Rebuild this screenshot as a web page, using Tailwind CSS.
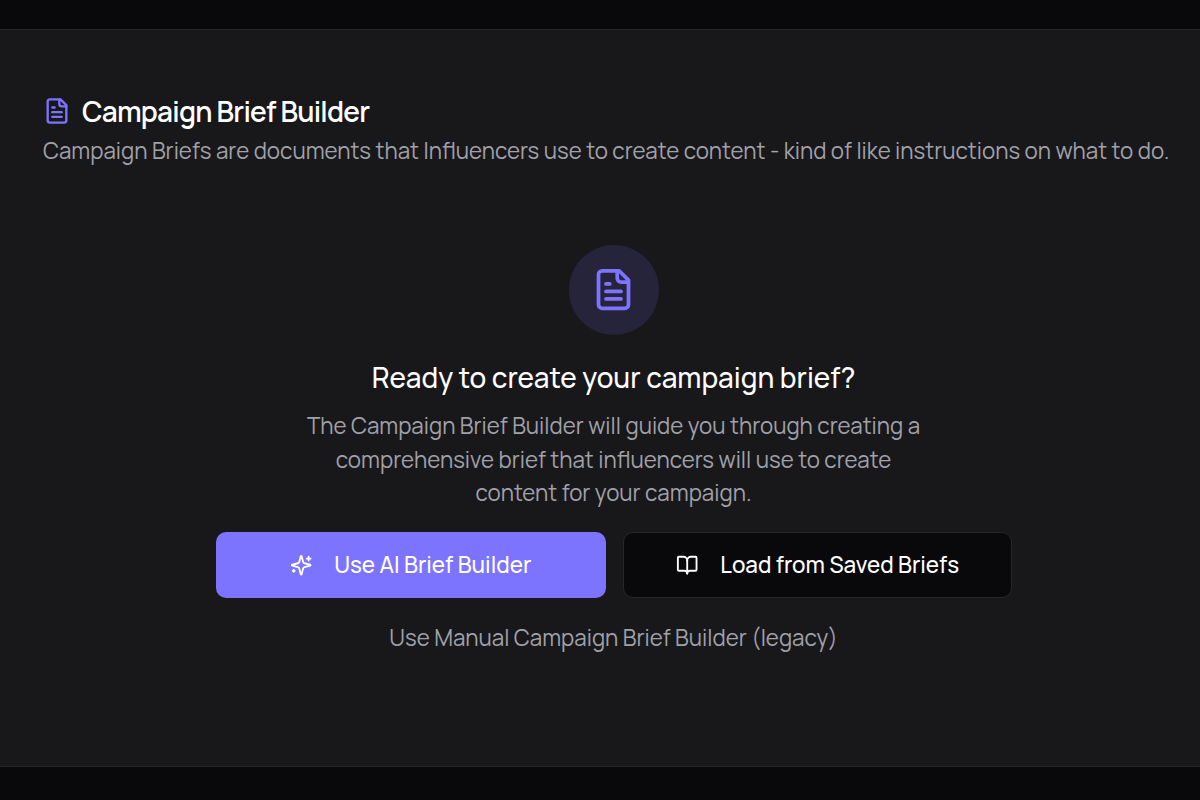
<!DOCTYPE html>
<html><head><script src="https://cdn.jsdelivr.net/npm/@tailwindcss/browser@4"></script></head>
<body class="m-0 bg-[#09090b] font-['Manrope','Inter','Noto_Sans',sans-serif]">
<div class="w-[1200px] h-[800px] overflow-hidden flex flex-col pt-[29px] pb-[33px]">
<main class="flex-1 bg-[#18181b] border-y border-[#27272a] pl-[43px] pr-[16px] pt-[63px]">
<div class="flex items-center gap-[11px] h-[36px]">
<svg class="w-[28px] h-[28px] text-[#7c73ff]" viewBox="0 0 24 24" fill="none" stroke="currentColor" stroke-width="2" stroke-linecap="round" stroke-linejoin="round"><path d="M15 2H6a2 2 0 0 0-2 2v16a2 2 0 0 0 2 2h12a2 2 0 0 0 2-2V7Z"/><path d="M14 2v4a2 2 0 0 0 2 2h4"/><path d="M10 9H8"/><path d="M16 13H8"/><path d="M16 17H8"/></svg>
<h1 class="text-[28px] font-semibold text-white tracking-[-0.75px]">Campaign Brief Builder</h1></div>
<p class="text-[22.3px] text-[#a1a1aa] whitespace-nowrap mt-[5px]">Campaign Briefs are documents that Influencers use to create content - kind of like instructions on what to do.</p>
<div class="flex flex-col items-center mt-[77.5px]">
<div class="w-[90px] h-[90px] rounded-full bg-[#26243a] flex items-center justify-center"><svg class="w-[45px] h-[45px] text-[#7c73ff]" viewBox="0 0 24 24" fill="none" stroke="currentColor" stroke-width="2" stroke-linecap="round" stroke-linejoin="round"><path d="M15 2H6a2 2 0 0 0-2 2v16a2 2 0 0 0 2 2h12a2 2 0 0 0 2-2V7Z"/><path d="M14 2v4a2 2 0 0 0 2 2h4"/><path d="M10 9H8"/><path d="M16 13H8"/><path d="M16 17H8"/></svg></div>
<h2 class="text-[27.85px] font-medium text-white mt-[22.5px]">Ready to create your campaign brief?</h2>
<p class="text-[22.3px] leading-[33.6px] text-[#a1a1aa] text-center w-[627px] mt-[10px]">The Campaign Brief Builder will guide you through creating a comprehensive brief that influencers will use to create content for your campaign.</p>
<div class="flex gap-[17px] mt-[22px]">
<button class="w-[390px] h-[66px] rounded-[10px] bg-[#7c73ff] text-white text-[22.4px] font-medium flex items-center justify-center gap-[22px]"><svg class="w-[22.4px] h-[22.4px]" viewBox="0 0 24 24" fill="none" stroke="currentColor" stroke-width="2" stroke-linecap="round" stroke-linejoin="round"><path d="M9.937 15.5A2 2 0 0 0 8.5 14.063l-6.135-1.582a.5.5 0 0 1 0-.962L8.5 9.936A2 2 0 0 0 9.937 8.5l1.582-6.135a.5.5 0 0 1 .963 0L14.063 8.5A2 2 0 0 0 15.5 9.937l6.135 1.581a.5.5 0 0 1 0 .964L15.5 14.063a2 2 0 0 0-1.437 1.437l-1.582 6.135a.5.5 0 0 1-.963 0z"/><path d="M20 3v4"/><path d="M22 5h-4"/><path d="M4 17v2"/><path d="M5 18H3"/></svg>Use AI Brief Builder</button>
<button class="w-[389px] h-[66px] rounded-[10px] bg-[#09090b] border border-[#27272a] text-white text-[22.4px] font-medium flex items-center justify-center gap-[22px]"><svg class="w-[22.4px] h-[22.4px] ml-[1px]" viewBox="0 0 24 24" fill="none" stroke="currentColor" stroke-width="2" stroke-linecap="round" stroke-linejoin="round"><path d="M12 7v14"/><path d="M3 18a1 1 0 0 1-1-1V4a1 1 0 0 1 1-1h5a4 4 0 0 1 4 4 4 4 0 0 1 4-4h5a1 1 0 0 1 1 1v13a1 1 0 0 1-1 1h-6a3 3 0 0 0-3 3 3 3 0 0 0-3-3z"/></svg>Load from Saved Briefs</button>
</div>
<p class="text-[22.3px] text-[#a1a1aa] mt-[23px]">Use Manual Campaign Brief Builder (legacy)</p>
</div>
</main></div></body></html>
